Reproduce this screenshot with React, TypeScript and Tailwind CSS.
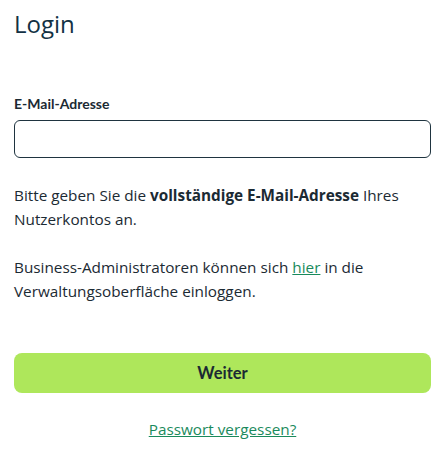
export default function App() {
  return (
    <div className="w-[445px] bg-white px-[14px] pt-[8px] text-[#1b2a33] font-['Open_Sans',sans-serif]">
      <h1 className="text-[24px] leading-[32px] font-normal text-[#123144]">Login</h1>

      <form className="mt-[55px] flex flex-col" onSubmit={(e) => e.preventDefault()}>
        <label
          htmlFor="email"
          className="text-[14px] leading-[18px] font-bold text-[#1b2a33] font-['Lato',sans-serif]"
        >
          E-Mail-Adresse
        </label>
        <input
          id="email"
          type="email"
          className="mt-[7px] h-[38px] w-full rounded-[6px] border border-[#1f3440] px-3 outline-none"
        />

        <p className="mt-[25px] text-[15.3px] leading-[24px]">
          Bitte geben Sie die <span className="font-bold">vollständige E-Mail-Adresse</span> Ihres
          Nutzerkontos an.
        </p>

        <p className="mt-[24px] text-[15.3px] leading-[24px]">
          Business-Administratoren können sich{" "}
          <a href="#" className="text-[#1a8a5c] underline">
            hier
          </a>{" "}
          in die Verwaltungsoberfläche einloggen.
        </p>

        <button
          type="submit"
          className="mt-[50px] h-[40px] w-full rounded-[8px] bg-[#aee75b] text-[16.5px] font-bold text-[#1b2a33] font-['Lato',sans-serif]"
        >
          Weiter
        </button>

        <div className="mt-[24px] text-center">
          <a href="#" className="text-[15.3px] text-[#1a8a5c] underline">
            Passwort vergessen?
          </a>
        </div>
      </form>
    </div>
  );
}
